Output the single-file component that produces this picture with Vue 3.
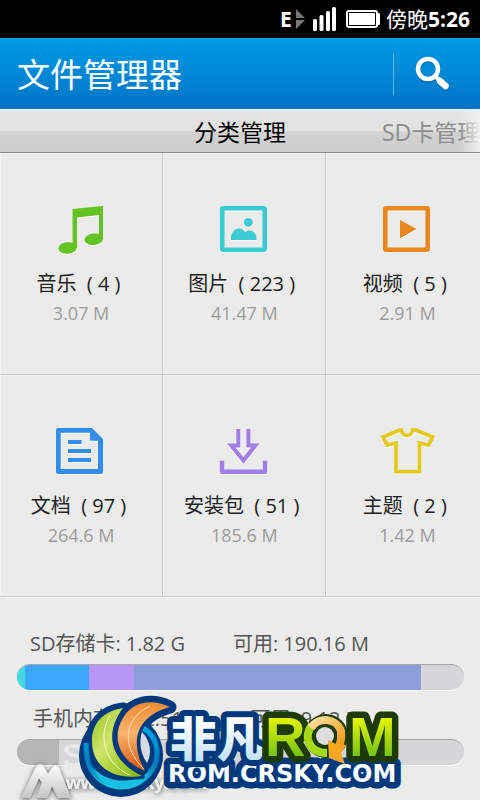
<script setup>
import { ref } from 'vue'

const activeTab = ref('category')

const categories = [
  { id: 'music', name: '音乐', count: 4, size: '3.07 M' },
  { id: 'image', name: '图片', count: 223, size: '41.47 M' },
  { id: 'video', name: '视频', count: 5, size: '2.91 M' },
  { id: 'doc', name: '文档', count: 97, size: '264.6 M' },
  { id: 'apk', name: '安装包', count: 51, size: '185.6 M' },
  { id: 'theme', name: '主题', count: 2, size: '1.42 M' }
]

// 各段宽度为百分比
const storages = [
  {
    id: 'sd',
    name: 'SD存储卡:',
    total: '1.82 G',
    free: '190.16 M',
    segments: [
      { color: '#45d8dc', width: 1.8 },
      { color: '#3aa6ff', width: 14.4 },
      { color: '#b796f5', width: 10 },
      { color: '#8e9ddb', width: 64.2 }
    ]
  },
  {
    id: 'phone',
    name: '手机内存储:',
    total: '2.51 G',
    free: '9.12 M',
    segments: [{ color: '#b5b5b6', width: 9.4 }]
  }
]

const label = (c) => `${c.name}  ( ${c.count} ) `
</script>

<template>
  <div class="page">
    <div class="status-bar">
      <svg class="status-icons" width="102" height="28" viewBox="0 0 102 28">
        <text x="0" y="22" class="net-type">E</text>
        <path d="M16 4l9 9h-9zM16 15h9l-9 9z" fill="#777" />
        <g fill="#fff">
          <rect x="33" y="14" width="4" height="12" rx="1.5" />
          <rect x="39.500" y="10" width="4" height="16" rx="1.5" />
          <rect x="46" y="6" width="4" height="20" rx="1.5" />
          <rect x="52" y="2" width="4" height="24" rx="1.5" />
        </g>
        <rect x="67" y="6" width="30" height="16" rx="2" fill="none" stroke="#fff" stroke-width="2" />
        <rect x="69" y="8" width="26" height="12" fill="#fff" />
        <path d="M97 8h2q1 0 1 2v8q0 2-1 2h-2z" fill="#fff" />
      </svg>
      <span class="clock">傍晚<b>5:26</b></span>
    </div>

    <header class="title-bar">
      <h1>文件管理器</h1>
      <button class="search-btn" aria-label="搜索">
        <svg width="38" height="38" viewBox="0 0 38 38">
          <g fill="none" stroke-linecap="round">
            <g stroke="#00508f" opacity="0.5" transform="translate(0 1.500)">
              <circle cx="14" cy="14" r="10" stroke-width="4.500" />
              <path d="M21 21l4 4" stroke-width="4" />
              <path d="M26 26l5.500 5" stroke-width="6.500" />
            </g>
            <g stroke="#fff">
              <circle cx="14" cy="14" r="10" stroke-width="4.500" />
              <path d="M21 21l4 4" stroke-width="4" />
              <path d="M26 26l5.500 5" stroke-width="6.500" />
            </g>
          </g>
        </svg>
      </button>
    </header>

    <nav class="tabs">
      <button :class="['tab', 'tab-main', { active: activeTab === 'category' }]" @click="activeTab = 'category'">分类管理</button>
      <button :class="['tab', 'tab-next', { active: activeTab === 'sd' }]" @click="activeTab = 'sd'">SD卡管理</button>
    </nav>

    <main class="grid">
      <button v-for="c in categories" :key="c.id" class="cell">
        <svg class="icon" width="56" height="50" viewBox="0 0 56 50">
          <g v-if="c.id === 'music'" fill="#62c322">
            <path d="M19.500 5L50 2v33h-4V11L24 13.500V44h-4.500z" />
            <ellipse cx="14.500" cy="44" rx="9.200" ry="5.800" transform="rotate(-6 14.500 44)" />
            <ellipse cx="40.700" cy="35.300" rx="9.300" ry="5.800" transform="rotate(-6 40.700 35.300)" />
          </g>
          <g v-else-if="c.id === 'image'" fill="#3ecad2">
            <rect x="6.300" y="4.300" width="42.400" height="41.400" rx="1" fill="none" stroke="#3ecad2" stroke-width="4.600" />
            <circle cx="32.300" cy="18.300" r="4.400" />
            <path d="M15 36v-3c1-5 4-8.500 7.500-8.500 3 0 5 1.500 6.500 4 1.500-1.500 3-2 4.500-2 3.500 0 6.500 3 7 7V36z" />
          </g>
          <g v-else-if="c.id === 'video'" fill="#e8871e">
            <rect x="6.300" y="4.300" width="42.400" height="41.400" rx="1" fill="none" stroke="#e8871e" stroke-width="4.600" />
            <path d="M21 16l16.500 9L21 34.300z" />
          </g>
          <g v-else-if="c.id === 'doc'" fill="#328eea">
            <path fill-rule="evenodd" d="M5 2h34l11 11v33q0 2-2 2H5q-2 0-2-2V4q0-2 2-2zM7.700 6.700V43H45V14.700h-8v-8z" />
            <path d="M15 14h13.600v4H15zM15 23h23v4H15zM15 32h23v4H15z" />
          </g>
          <g v-else-if="c.id === 'apk'" fill="none" stroke="#9f7fe6" stroke-width="4">
            <path d="M6 34.700v11h43v-11" stroke-width="4.400" stroke-linejoin="round" />
            <path d="M22.300 3v16.500h-7L27.400 34.500l12-15h-7V3" />
          </g>
          <path v-else d="M20.500 4.200L4 11l4 8 9-2v28.700h23.500V17l9 2 4-8-16.500-6.800h-3.500c-1 7-10 7-11 0z" fill="none" stroke="#e2c921" stroke-width="3.800" />
        </svg>
        <span class="cell-name">{{ label(c) }}</span>
        <span class="cell-size">{{ c.size }}</span>
      </button>
    </main>

    <section class="storage">
      <div v-for="s in storages" :key="s.id" :class="['storage-item', s.id]">
        <div class="storage-text">
          <span>{{ s.name }}</span>
          <span class="total">{{ s.total }}</span>
          <span>可用:</span>
          <span>{{ s.free }}</span>
        </div>
        <div class="bar">
          <div v-for="(seg, i) in s.segments" :key="i" class="segment" :style="{ width: seg.width + '%', background: seg.color }"></div>
        </div>
      </div>

      <svg class="brand" width="420" height="110" viewBox="0 0 420 110">
        <defs>
          <linearGradient id="silver" x1="0" y1="0" x2="0" y2="1">
            <stop offset="0" stop-color="#fff" />
            <stop offset="1" stop-color="#c5c5c5" />
          </linearGradient>
          <linearGradient id="green" x1="0" y1="0" x2="1" y2="1">
            <stop offset="0" stop-color="#8fc31f" />
            <stop offset="0.400" stop-color="#cfe56a" />
            <stop offset="1" stop-color="#7fb800" />
          </linearGradient>
          <linearGradient id="orange" x1="0" y1="0" x2="0" y2="1">
            <stop offset="0" stop-color="#f08b35" />
            <stop offset="0.450" stop-color="#f9b36c" />
            <stop offset="1" stop-color="#d9560d" />
          </linearGradient>
          <linearGradient id="ring" x1="0" y1="0" x2="0" y2="1">
            <stop offset="0" stop-color="#00a8e6" />
            <stop offset="0.600" stop-color="#0079bd" />
            <stop offset="1" stop-color="#19c5dd" />
          </linearGradient>
          <linearGradient id="ice" x1="0" y1="0" x2="0" y2="1">
            <stop offset="0.300" stop-color="#fff" />
            <stop offset="1" stop-color="#b4dcf8" />
          </linearGradient>
          <linearGradient id="lime" x1="0" y1="0" x2="0" y2="1">
            <stop offset="0.200" stop-color="#e6f500" />
            <stop offset="0.850" stop-color="#6cc015" />
          </linearGradient>
          <linearGradient id="gold" x1="0" y1="0" x2="1" y2="1">
            <stop offset="0" stop-color="#fbe0a0" />
            <stop offset="1" stop-color="#f29a13" />
          </linearGradient>
          <filter id="shade" x="-20%" y="-20%" width="140%" height="150%">
            <feDropShadow dx="0" dy="1" stdDeviation="2.500" flood-color="#222" flood-opacity="0.800" />
          </filter>
        </defs>

        <!-- 灰色水印 -->
        <g filter="url(#shade)">
          <path d="M21 107L36 76q4-6 8 0l4 7 4-6q4-5 7 0l12 30H58l-6-12-5 12H36l6-15-3-5-9 20z" fill="url(#silver)" />
          <text x="66" y="98" class="mark-url">www.crsky.com</text>
        </g>
        <text x="62" y="76" class="mark-name">S</text>

        <!-- 图标深色底 -->
        <circle cx="121" cy="64" r="42" fill="#003a7c" />
        <g fill="#003a7c" stroke="#003a7c" stroke-width="13" stroke-linejoin="round">
          <path d="M123 18c-20 2-32 17-31 35 1 20 17 35 49 32z" />
          <path d="M170 16c-19-9-38-5-47 11-12 19-4 43 22 53-15-27-11-54 25-64z" />
        </g>
        <path d="M143 37c17 10 18 32 6 46-16 20-49 17-60-9q-3-8-3-22" fill="none" stroke="url(#ring)" stroke-width="5" />
        <path d="M93 76c12 16 41 19 57 3-9 24-45 27-57-3z" fill="#19bfe0" />
        <path d="M123 17c-21 3-32 17-31 35 1 22 18 37 50 33-27-13-41-38-19-68z" fill="url(#green)" stroke="#003a7c" stroke-width="6" stroke-linejoin="round" paint-order="stroke" />
        <path d="M115 24c-14 25-2 51 20 60" fill="none" stroke="#f4fac8" stroke-width="1" transform="translate(-5 0)" />
        <path d="M170 16c-19-9-38-5-47 11-12 19-4 43 22 53-15-27-11-54 25-64z" fill="url(#orange)" stroke="#003a7c" stroke-width="6" stroke-linejoin="round" paint-order="stroke" />
        <path d="M150 15c-29 14-27 43-6 63" fill="none" stroke="#ffe2b6" stroke-width="1" />
        <path d="M142 41c9 9 10 22 5 31-7-10-8-22-5-31z" fill="#d6dce1" />

        <!-- 文字部分 -->
        <g stroke-linejoin="round" paint-order="stroke">
          <text x="168" y="91" class="brand-url">ROM.CRSKY.COM</text>
          <text x="170" y="65" class="brand-cn">非凡</text>
          <circle cx="326" cy="45" r="22" fill="#1f3b05" />
          <text x="265" y="65" class="brand-rom">R</text>
          <text x="349" y="65" class="brand-rom">M</text>
          <circle cx="325" cy="45" r="9" fill="#dedede" />
          <path d="M312 34C303 46 309 62 327 62" fill="none" stroke="#a5d816" stroke-width="8" />
          <path d="M311 37C319 24 337 28 341 40q1 8-2 16" fill="none" stroke="url(#gold)" stroke-width="8" />
          <path d="M328 49l8 4 10 1-5 8 4 11-16-6z" fill="#f6a821" />
        </g>
      </svg>
    </section>
  </div>
</template>

<style>
body {
  background: #ebebeb;
}
</style>

<style scoped>
.page {
  position: relative;
  min-height: 100vh;
  overflow: hidden;
  background: #ebebeb;
  font-family: "Open Sans", "Noto Sans CJK SC", sans-serif;
}
button {
  border: 0;
  padding: 0;
  margin: 0;
  background: none;
  font-family: inherit;
  cursor: pointer;
}
svg {
  display: block;
}

.status-bar {
  display: flex;
  align-items: center;
  justify-content: flex-end;
  gap: 4px;
  height: 38px;
  padding-right: 10px;
  background: #000;
  color: #fff;
}
.net-type {
  font: bold 21px "Open Sans", sans-serif;
  fill: #fff;
}
.clock {
  font-size: 21px;
  line-height: 38px;
}

.title-bar {
  display: flex;
  align-items: center;
  justify-content: space-between;
  height: 71px;
  padding-left: 17px;
  background: linear-gradient(#009ce4, #0074c6);
}
.title-bar h1 {
  margin: 0;
  padding-top: 3px;
  color: #fff;
  font-size: 33px;
  font-weight: 400;
  line-height: 68px;
}
.search-btn {
  display: flex;
  align-items: center;
  height: 42px;
  padding: 0 28px 0 20px;
  border-left: 1px solid #5fb9ec;
}

.tabs {
  display: grid;
  grid-template-columns: 1fr auto 1fr;
  height: 43px;
  overflow: hidden;
  position: relative;
  border-bottom: 1px solid #8c8c8c;
  background: linear-gradient(#f6f6f6 0, #e4e4e4 3px, #e2e2e2 22px, #d2d2d2 23px, #cecece 100%);
}
.tabs::after {
  content: "";
  position: absolute;
  top: 0;
  right: 0;
  bottom: 0;
  width: 20px;
  background: linear-gradient(90deg, rgba(240, 240, 240, 0), #f0f0f0);
  pointer-events: none;
}
.tab {
  color: #8d8d8d;
  font-size: 23px;
  line-height: 46px;
  white-space: nowrap;
}
.tab.active {
  color: #000;
}
.tab-main {
  grid-column: 2;
}
.tab-next {
  min-width: 0;
  padding-left: 96px;
  text-align: left;
}

/* 三列略宽于屏幕，右侧边线在屏幕外 */
.grid {
  display: grid;
  grid-template-columns: repeat(3, 34%);
  overflow: hidden;
}
.cell {
  display: flex;
  flex-direction: column;
  align-items: center;
  height: 222px;
  padding-top: 51px;
  border-right: 1px solid #c8c8c8;
  border-bottom: 1px solid #c8c8c8;
  box-shadow: inset 1px 1px #f3f3f3;
}
.icon {
  margin-bottom: 16px;
  filter: drop-shadow(0 1px 0 #fff);
}
.cell-name {
  color: #222;
  font-size: 20px;
  line-height: 28px;
  white-space: pre;
}
.cell-size {
  color: #9c9c9c;
  font-size: 18px;
  line-height: 30px;
}

.storage {
  position: relative;
  padding: 33px 16px 36px 17px;
  box-shadow: inset 0 1px #f6f6f6;
}
.storage-item + .storage-item {
  margin-top: 15px;
}
.storage-text {
  display: flex;
  gap: 5px;
  height: 28px;
  margin-bottom: 6px;
  padding-left: 13px;
  color: #555;
  font-size: 20px;
  line-height: 28px;
  white-space: nowrap;
}
.phone .storage-text {
  padding-left: 16px;
}
.total {
  margin-right: 43px;
}
.bar {
  display: flex;
  height: 25px;
  overflow: hidden;
  border-top: 1px solid #a5a5a8;
  border-radius: 13px;
  background: #d6d6d8;
  box-shadow: 0 1px #fafafa;
}
.segment {
  height: 100%;
}

.brand {
  position: absolute;
  left: 0;
  bottom: 0;
}
.mark-url {
  font: bold 19px "Liberation Sans", sans-serif;
  fill: #f0f0f0;
}
.mark-name {
  font: bold 34px "Liberation Sans", sans-serif;
  fill: #e8e8e8;
}
.brand-cn {
  font: oblique 10deg 900 47px "Noto Sans CJK SC", sans-serif;
  fill: url(#ice);
  stroke: #003a7c;
  stroke-width: 12px;
}
.brand-rom {
  font: bold 56px "Liberation Sans", sans-serif;
  fill: url(#lime);
  stroke: #1f3b05;
  stroke-width: 13px;
}
.brand-url {
  font: bold 24px "DejaVu Sans", sans-serif;
  fill: #fff;
  stroke: #003a7c;
  stroke-width: 13px;
}
</style>
